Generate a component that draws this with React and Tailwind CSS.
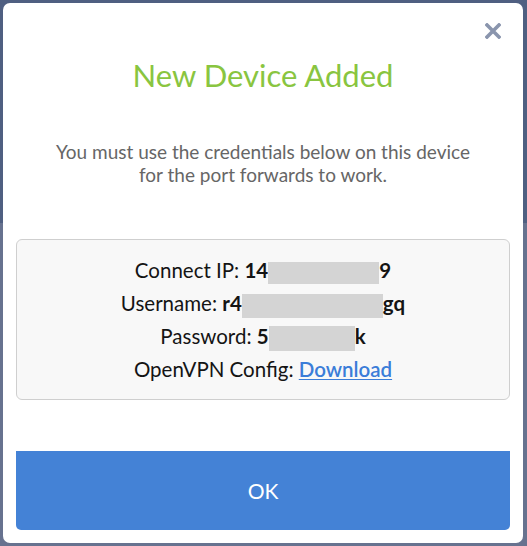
import React from 'react';

function Redacted({ w, h }) {
  return <span className={`inline-block align-middle bg-[#d4d4d4] ${w} ${h}`}></span>;
}

function CloseIcon() {
  return (
    <svg width="16" height="16" viewBox="0 0 16 16" className="block">
      <path d="M2 2 L14 14 M14 2 L2 14" stroke="#8a95ad" strokeWidth="3.6" strokeLinecap="square" />
    </svg>
  );
}

export default function App() {
  return (
    <div className="w-[527px] h-[546px] pt-[3px] pl-[3px] bg-[linear-gradient(to_bottom,#4f5f81_223px,#67728f_223px)] font-['Lato',sans-serif]">
      <div className="relative w-[520px] h-[540px] bg-white rounded-[7px] px-[13px] pb-[13px] pt-[53px] flex flex-col">
        {/* Close */}
        <button className="absolute top-[20px] right-[22px] p-0">
          <CloseIcon />
        </button>

        <h2 className="text-center text-[31px] leading-[38px] text-[#89c540] font-normal">New Device Added</h2>

        <p className="mt-[46px] text-center text-[19px] leading-[23px] text-[#666666]">
          You must use the credentials below on this device
          <br />
          for the port forwards to work.
        </p>

        {/* Credentials box */}
        <div className="mt-[53px] border border-[#cfcfcf] rounded-[6px] bg-[#f8f8f8] pt-[14px] pb-[13px] text-center text-[20.5px] leading-[33px] text-[#141414]">
          <div>
            Connect IP: <strong className="font-bold">14</strong>
            <Redacted w="w-[111px]" h="h-[22px]" />
            <strong className="font-bold">9</strong>
          </div>
          <div>
            Username: <strong className="font-bold">r4</strong>
            <Redacted w="w-[141px]" h="h-[24px]" />
            <strong className="font-bold">gq</strong>
          </div>
          <div>
            Password: <strong className="font-bold">5</strong>
            <Redacted w="w-[86px]" h="h-[25px]" />
            <strong className="font-bold">k</strong>
          </div>
          <div>
            OpenVPN Config: <a href="#" className="text-[#3b7dd8] font-semibold underline decoration-1 underline-offset-2">Download</a>
          </div>
        </div>

        <button className="mt-auto h-[79px] w-full bg-[#4482d6] text-white text-[21px] rounded-b-[5px]">
          OK
        </button>
      </div>
    </div>
  );
}
